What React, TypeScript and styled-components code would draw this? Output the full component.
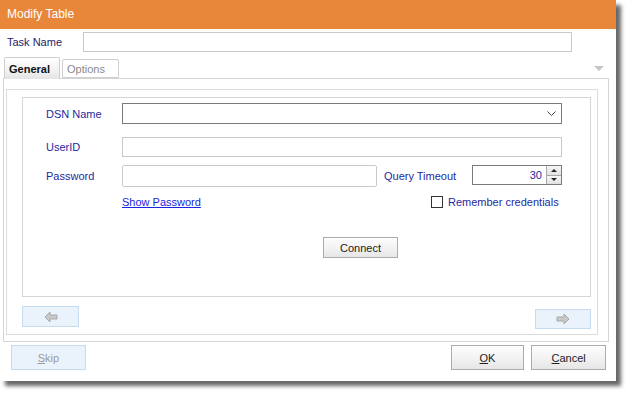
import React from 'react'
import styled, { createGlobalStyle } from 'styled-components'

const GlobalStyle = createGlobalStyle`
  html, body {
    margin: 0;
    padding: 0;
    background: #fff;
  }
  body {
    font-family: 'Liberation Sans', Arial, sans-serif;
    font-size: 11px;
  }
  * {
    box-sizing: border-box;
  }
`

const Page = styled.div`
  width: 631px;
  height: 396px;
  background: #fff;
  overflow: hidden;
`

const Window = styled.div`
  width: 616px;
  height: 381px;
  background: #fff;
  box-shadow: 5px 5px 4px rgba(0, 0, 0, 0.6);
  display: flex;
  flex-direction: column;
`

const TitleBar = styled.div`
  height: 29px;
  line-height: 29px;
  padding-left: 7px;
  background: #e8873a;
  color: #fff;
  font-size: 12px;
`

const TaskRow = styled.div`
  display: flex;
  align-items: center;
  margin-top: 3px;
  padding-left: 7px;
`

const TaskLabel = styled.span`
  width: 76px;
  color: #1e2468;
`

const TextBox = styled.div<{ $w: number; $h?: number; $dark?: boolean; $round?: boolean }>`
  width: ${({ $w }) => $w}px;
  height: ${({ $h }) => $h ?? 20}px;
  border: 1px solid ${({ $dark }) => ($dark ? '#7a7a7a' : '#c9c9c9')};
  border-radius: ${({ $round }) => ($round ? '2px' : '0')};
  background: #fff;
  display: flex;
  align-items: center;
  justify-content: flex-end;
  padding-right: 8px;
`

const TabStrip = styled.div`
  display: flex;
  align-items: flex-end;
  margin-top: 5px;
  height: 22px;
  padding-left: 4px;
  position: relative;
  z-index: 1;
`

const Tab = styled.div<{ $active?: boolean }>`
  height: ${({ $active }) => ($active ? 22 : 19)}px;
  width: ${({ $active }) => ($active ? 56 : 57)}px;
  margin-left: ${({ $active }) => ($active ? 0 : 2)}px;
  margin-bottom: ${({ $active }) => ($active ? 0 : 1)}px;
  padding-left: 4px;
  display: flex;
  align-items: center;
  border: 1px solid #cfcfcf;
  border-bottom: ${({ $active }) => ($active ? 'none' : '1px solid #cfcfcf')};
  border-radius: 2px 2px 0 0;
  background: ${({ $active }) => ($active ? 'linear-gradient(#ffffff, #f1f1f1 60%, #e4e4e4)' : '#fff')};
  color: ${({ $active }) => ($active ? '#111' : '#8a8a8a')};
  font-weight: ${({ $active }) => ($active ? 'bold' : 'normal')};
`

const TabMenu = styled.div`
  margin-left: auto;
  margin-right: 12px;
  align-self: center;
  width: 0;
  height: 0;
  border-left: 5px solid transparent;
  border-right: 5px solid transparent;
  border-top: 5px solid #c6c6c6;
`

const TabPage = styled.div`
  margin-top: -1px;
  margin-left: 3px;
  width: 606px;
  height: 264px;
  border: 1px solid #d4d4d4;
  padding: 10px 0 0 2px;
`

const InnerPanel = styled.div`
  width: 592px;
  height: 246px;
  border: 1px solid #dcdcdc;
  padding: 7px 0 0 15px;
`

const GroupBox = styled.div`
  width: 569px;
  height: 200px;
  border: 1px solid #d6d6d6;
  padding-top: 5px;
  display: flex;
  flex-direction: column;
`

const FormRow = styled.div<{ $gap: number }>`
  display: flex;
  align-items: flex-start;
  padding-left: 23px;
  margin-top: ${({ $gap }) => $gap}px;
`

const FieldLabel = styled.span<{ $w: number; $h?: number; $ml?: number }>`
  width: ${({ $w }) => $w}px;
  height: ${({ $h }) => $h ?? 21}px;
  margin-left: ${({ $ml }) => $ml ?? 0}px;
  display: flex;
  align-items: center;
  color: #1f2aa0;
`

const Chevron = styled.svg`
  margin-right: -3px;
`

const Value = styled.span`
  color: #1f2aa0;
  margin-right: 4px;
`

const SpinButtons = styled.div`
  width: 15px;
  height: 18px;
  margin-right: -8px;
  border-left: 1px solid #a8a8a8;
  display: flex;
  flex-direction: column;
`

const SpinHalf = styled.div<{ $down?: boolean }>`
  flex: 1;
  display: flex;
  align-items: center;
  justify-content: center;
  background: linear-gradient(#f6f6f6, #e2e2e2);
  border-top: ${({ $down }) => ($down ? '1px solid #a8a8a8' : 'none')};
  &::after {
    content: '';
    border-left: 3px solid transparent;
    border-right: 3px solid transparent;
    ${({ $down }) => ($down ? 'border-top: 3px solid #222;' : 'border-bottom: 3px solid #222;')}
  }
`

const LinkCell = styled.div`
  width: 385px;
  padding-left: 76px;
  height: 14px;
  display: flex;
  align-items: center;
`

const Link = styled.a`
  color: #1a25e0;
  text-decoration: underline;
  cursor: pointer;
`

const CheckWrap = styled.label`
  display: flex;
  align-items: center;
  height: 14px;
  color: #1f2aa0;
`

const CheckBox = styled.span`
  width: 12px;
  height: 12px;
  border: 1px solid #333;
  background: #fff;
  margin-right: 5px;
`

const Button = styled.button<{ $w: number; $h?: number; $ml?: number; $disabled?: boolean }>`
  width: ${({ $w }) => $w}px;
  height: ${({ $h }) => $h ?? 21}px;
  margin: 0 0 0 ${({ $ml }) => $ml ?? 0}px;
  padding: 0;
  font: inherit;
  font-family: 'Liberation Sans', Arial, sans-serif;
  font-size: 11px;
  display: flex;
  align-items: center;
  justify-content: center;
  color: ${({ $disabled }) => ($disabled ? '#9a9a9a' : '#222')};
  border: 1px solid ${({ $disabled }) => ($disabled ? '#c7dbef' : '#acacac')};
  background: ${({ $disabled }) => ($disabled ? '#eaf3fc' : 'linear-gradient(#fdfdfd, #f3f3f3 50%, #e6e6e6)')};
  u {
    text-decoration: underline;
  }
`

const NavRow = styled.div`
  display: flex;
  justify-content: space-between;
  align-items: flex-start;
  width: 569px;
  margin-top: 9px;
`

const BottomRow = styled.div`
  display: flex;
  align-items: flex-start;
  margin-top: 3px;
  padding: 0 10px 0 11px;
`

function Arrow({ dir }: { dir: 'left' | 'right' }) {
  const pts = dir === 'left' ? '1,6 6,1 6,4 13,4 13,8 6,8 6,11' : '13,6 8,1 8,4 1,4 1,8 8,8 8,11'
  return (
    <svg width="14" height="12" viewBox="0 0 14 12">
      <polygon points={pts} fill="#c8c8c8" stroke="#a9a9a9" strokeWidth="1" strokeLinejoin="round" />
    </svg>
  )
}

export default function App() {
  return (
    <Page>
      <GlobalStyle />
      <Window>
        <TitleBar>Modify Table</TitleBar>

        <TaskRow>
          <TaskLabel>Task Name</TaskLabel>
          <TextBox $w={489} />
        </TaskRow>

        <TabStrip>
          <Tab $active>General</Tab>
          <Tab>Options</Tab>
          <TabMenu />
        </TabStrip>

        <TabPage>
          <InnerPanel>
            <GroupBox>
              <FormRow $gap={0}>
                <FieldLabel $w={76}>DSN Name</FieldLabel>
                <TextBox $w={440} $h={21} $dark>
                  <Chevron width="9" height="6" viewBox="0 0 9 6">
                    <polyline points="0.5,0.5 4.5,4.5 8.5,0.5" fill="none" stroke="#444" strokeWidth="1" />
                  </Chevron>
                </TextBox>
              </FormRow>

              <FormRow $gap={13}>
                <FieldLabel $w={76} $h={20}>UserID</FieldLabel>
                <TextBox $w={440} />
              </FormRow>

              <FormRow $gap={8}>
                <FieldLabel $w={76} $h={22}>Password</FieldLabel>
                <TextBox $w={255} $h={22} $round />
                <FieldLabel $w={88} $h={22} $ml={7}>Query Timeout</FieldLabel>
                <TextBox $w={90} $h={20} $dark>
                  <Value>30</Value>
                  <SpinButtons>
                    <SpinHalf />
                    <SpinHalf $down />
                  </SpinButtons>
                </TextBox>
              </FormRow>

              <FormRow $gap={8}>
                <LinkCell>
                  <Link>Show Password</Link>
                </LinkCell>
                <CheckWrap>
                  <CheckBox />
                  Remember credentials
                </CheckWrap>
              </FormRow>

              <FormRow $gap={28}>
                <Button $w={75} $ml={277}>Connect</Button>
              </FormRow>
            </GroupBox>

            <NavRow>
              <Button $w={57} $disabled>
                <Arrow dir="left" />
              </Button>
              <Button $w={56} $h={20} $disabled style={{ marginTop: 3 }}>
                <Arrow dir="right" />
              </Button>
            </NavRow>
          </InnerPanel>
        </TabPage>

        <BottomRow>
          <Button $w={75} $h={25} $disabled>
            <span>
              <u>S</u>kip
            </span>
          </Button>
          <Button $w={74} $h={25} $ml={365}>
            <span>
              <u>O</u>K
            </span>
          </Button>
          <Button $w={75} $h={25} $ml={7}>
            <span>
              <u>C</u>ancel
            </span>
          </Button>
        </BottomRow>
      </Window>
    </Page>
  )
}
